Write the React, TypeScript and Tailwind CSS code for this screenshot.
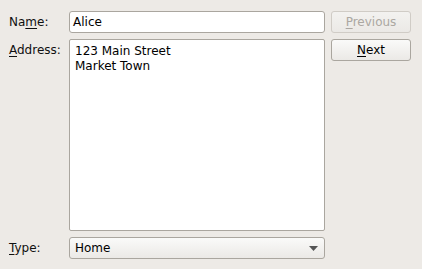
import React from "react";

const font = { fontFamily: '"DejaVu Sans", sans-serif' };

export default function App() {
  return (
    <div
      className="w-[422px] h-[269px] bg-[#edeae6] text-[12px] text-[#101010] pl-[9px] pt-[11px] grid grid-cols-[54px_256px_80px] grid-rows-[22px_192px_22px] gap-x-[6px] gap-y-[6px] leading-[14px]"
      style={font}
    >
      <div className="flex items-center">
        <span>
          Na<span className="underline underline-offset-2">m</span>e:
        </span>
      </div>
      <div className="bg-white border border-[#aaa69f] rounded-[3px] flex items-center pl-[3px] text-black">
        Alice
      </div>
      <button className="border border-[#d0ccc6] rounded-[3px] bg-gradient-to-b from-[#f3f2f0] to-[#ebe9e6] text-[#aba7a1] flex items-center justify-center">
        <span>
          <span className="underline underline-offset-2">P</span>revious
        </span>
      </button>

      <div className="pt-[4px]">
        <span>
          <span className="underline underline-offset-2">A</span>ddress:
        </span>
      </div>
      <div className="bg-white border border-[#aaa69f] rounded-[2px] pl-[5px] pt-[4px] leading-[15px] text-black">
        <div>123 Main Street</div>
        <div>Market Town</div>
      </div>
      <div>
        <button className="w-full h-[22px] border border-[#aaa69f] rounded-[3px] bg-gradient-to-b from-[#fafaf9] to-[#ebe9e6] text-black flex items-center justify-center">
          <span>
            <span className="underline underline-offset-2">N</span>ext
          </span>
        </button>
      </div>

      <div className="flex items-center">
        <span>
          <span className="underline underline-offset-2">T</span>ype:
        </span>
      </div>
      <div className="border border-[#aaa69f] rounded-[3px] bg-gradient-to-b from-[#fafaf9] to-[#ebe9e6] flex items-center justify-between pl-[5px] pr-[6px] text-black">
        <span>Home</span>
        <svg width="9" height="5" viewBox="0 0 9 5">
          <path d="M0 0 H9 L4.5 5 Z" fill="#555" />
        </svg>
      </div>
      <div />
    </div>
  );
}
